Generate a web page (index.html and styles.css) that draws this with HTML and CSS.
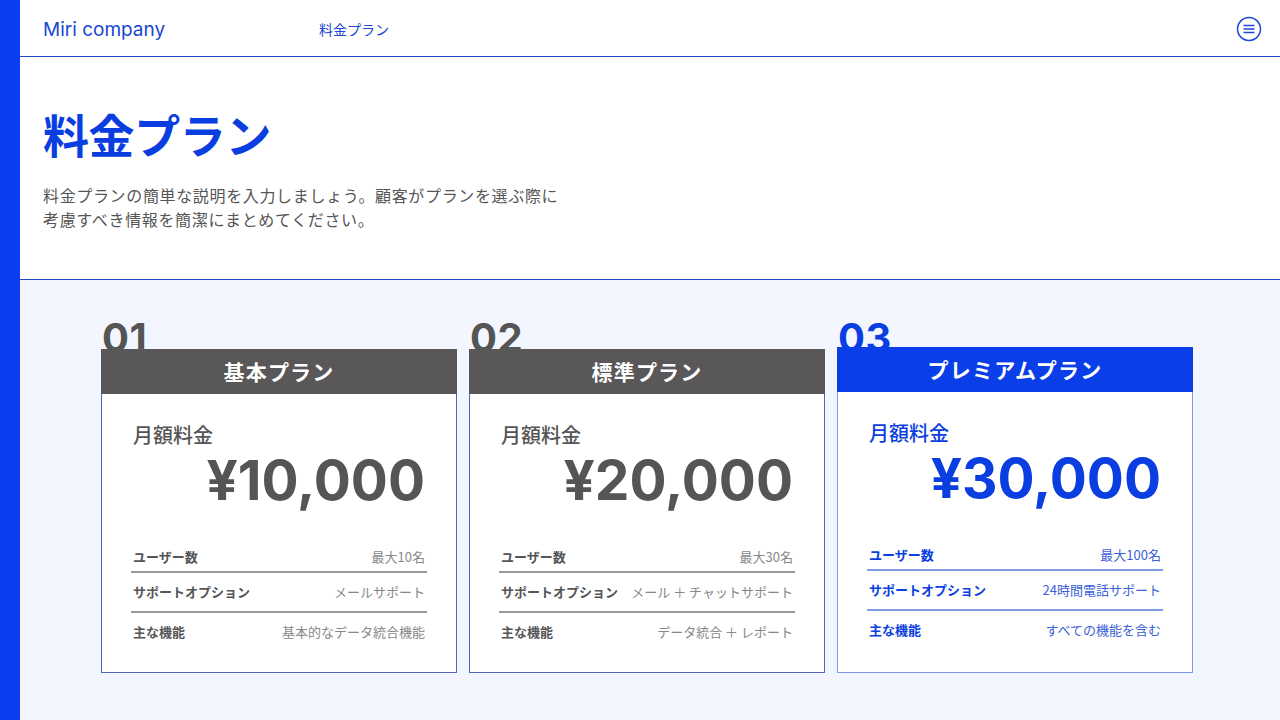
FILE: index.html
```html
<!DOCTYPE html>
<html lang="ja">
<head>
<meta charset="utf-8">
<title>料金プラン</title>
<link rel="stylesheet" href="styles.css">
</head>
<body>
<div class="sidebar"></div>
<div class="main">
  <header class="topbar">
    <div class="logo">Miri company</div>
    <nav class="nav">料金プラン</nav>
    <button class="menu" aria-label="menu">
      <svg width="26" height="26" viewBox="0 0 26 26">
        <circle cx="13" cy="13" r="11.5" fill="none" stroke="#1a47d8" stroke-width="1.5"/>
        <line x1="7.5" y1="9.5" x2="18.5" y2="9.5" stroke="#1a47d8" stroke-width="1.5"/>
        <line x1="7.5" y1="13" x2="18.5" y2="13" stroke="#1a47d8" stroke-width="1.5"/>
        <line x1="7.5" y1="16.5" x2="18.5" y2="16.5" stroke="#1a47d8" stroke-width="1.5"/>
      </svg>
    </button>
  </header>
  <section class="hero">
    <h1 class="title">料金プラン</h1>
    <p class="desc">料金プランの簡単な説明を入力しましょう。顧客がプランを選ぶ際に<br>考慮すべき情報を簡潔にまとめてください。</p>
  </section>
  <section class="plans">
    <div class="plan">
      <div class="num">01</div>
      <div class="card">
        <div class="card-head">基本プラン</div>
        <div class="card-body">
          <div class="label">月額料金</div>
          <div class="price">¥10,000</div>
          <ul class="rows">
            <li class="row"><span class="k">ユーザー数</span><span class="v">最大10名</span></li>
            <li class="row"><span class="k">サポートオプション</span><span class="v">メールサポート</span></li>
            <li class="row"><span class="k">主な機能</span><span class="v">基本的なデータ統合機能</span></li>
          </ul>
        </div>
      </div>
    </div>
    <div class="plan">
      <div class="num">02</div>
      <div class="card">
        <div class="card-head">標準プラン</div>
        <div class="card-body">
          <div class="label">月額料金</div>
          <div class="price">¥20,000</div>
          <ul class="rows">
            <li class="row"><span class="k">ユーザー数</span><span class="v">最大30名</span></li>
            <li class="row"><span class="k">サポートオプション</span><span class="v">メール ＋ チャットサポート</span></li>
            <li class="row"><span class="k">主な機能</span><span class="v">データ統合 ＋ レポート</span></li>
          </ul>
        </div>
      </div>
    </div>
    <div class="plan premium">
      <div class="num">03</div>
      <div class="card">
        <div class="card-head">プレミアムプラン</div>
        <div class="card-body">
          <div class="label">月額料金</div>
          <div class="price">¥30,000</div>
          <ul class="rows">
            <li class="row"><span class="k">ユーザー数</span><span class="v">最大100名</span></li>
            <li class="row"><span class="k">サポートオプション</span><span class="v">24時間電話サポート</span></li>
            <li class="row"><span class="k">主な機能</span><span class="v">すべての機能を含む</span></li>
          </ul>
        </div>
      </div>
    </div>
  </section>
</div>
</body>
</html>
```
FILE: styles.css
```css
* { box-sizing: border-box; }
html, body { height: 100%; }
body {
  margin: 0;
  display: flex;
  font-family: Inter, "Noto Sans CJK JP", sans-serif;
  color: #555;
  background: #f3f6fe;
}
.sidebar {
  width: 20px;
  flex: none;
  background: #0a3ef0;
}
.main {
  flex: 1;
  display: flex;
  flex-direction: column;
  min-height: 720px;
}
.topbar {
  height: 57px;
  display: flex;
  align-items: center;
  padding: 1px 18px 0 23px;
  background: #fff;
  border-bottom: 1px solid #2349c4;
}
.logo {
  font-family: Inter, "Noto Sans CJK JP", sans-serif;
  font-size: 19px;
  color: #1a47d0;
  width: 276px;
  padding-top: 2px;
}
.nav {
  font-family: "Noto Sans CJK JP", sans-serif;
  font-size: 14px;
  color: #1a47d0;
  flex: 1;
}
.menu {
  border: 0;
  background: none;
  padding: 0;
  width: 26px;
  height: 26px;
  display: flex;
}
.hero {
  background: #fff;
  padding: 49px 23px 48px;
  border-bottom: 1px solid #2349c4;
}
.title {
  margin: 0;
  font-family: "Noto Sans CJK JP", sans-serif;
  font-weight: 700;
  font-size: 46px;
  line-height: 55px;
  color: #0a3ee0;
  letter-spacing: -0.4px;
}
.desc {
  margin: 23px 0 0;
  font-family: "Noto Sans CJK JP", sans-serif;
  font-size: 16px;
  line-height: 23.5px;
  letter-spacing: 0.65px;
  color: #555;
}
.plans {
  flex: 1;
  display: flex;
  gap: 12px;
  padding: 38px 0 0 81px;
  background: #f3f6fe;
}
.plan {
  width: 356px;
  display: flex;
  flex-direction: column;
}
.num {
  font-family: Inter, sans-serif;
  font-weight: 700;
  font-size: 40px;
  line-height: 40px;
  color: #555;
  margin: 0 0 -9px 1px;
  letter-spacing: 0.5px;
}
.card {
  position: relative;
  z-index: 1;
  background: #fff;
  border: 1px solid #5468b8;
}
.card-head {
  height: 45px;
  margin: -1px -1px 0;
  background: #595757;
  color: #fff;
  font-family: "Noto Sans CJK JP", sans-serif;
  font-weight: 700;
  font-size: 21px;
  line-height: 45px;
  text-align: center;
  letter-spacing: 1.2px;
}
.card-body {
  padding: 27px 29px 21px;
}
.label {
  font-family: "Noto Sans CJK JP", sans-serif;
  font-weight: 500;
  font-size: 20px;
  line-height: 28px;
  padding: 0 2px;
  color: #555;
}
.price {
  font-family: Inter, sans-serif;
  font-weight: 700;
  font-size: 55px;
  line-height: 62px;
  text-align: right;
  padding: 0 2px;
  color: #555;
}
.rows {
  list-style: none;
  margin: 36px 0 0;
  padding: 0;
}
.row {
  display: flex;
  justify-content: space-between;
  align-items: center;
  padding: 10px 2px 10px;
  font-family: "Noto Sans CJK JP", sans-serif;
  font-size: 13px;
  line-height: 18px;
  border-bottom: 2px solid #999;
}
.row:first-child { padding-top: 1px; padding-bottom: 5px; }
.row:last-child { border-bottom: 0; }
.k { font-weight: 700; color: #555; }
.v { color: #888; }

.premium .num { color: #0a3ee0; margin-bottom: -11px; }
.premium .card { border-color: #7f9ae6; }
.premium .card-head { background: #0a3ee8; }
.premium .card-body { padding-bottom: 23px; }
.premium .label,
.premium .price,
.premium .k { color: #0a3ee0; }
.premium .v { color: #3a5fd8; }
.premium .row { border-bottom-color: #7f9ae6; }
.premium .row:last-child { border-bottom: 0; }
```
